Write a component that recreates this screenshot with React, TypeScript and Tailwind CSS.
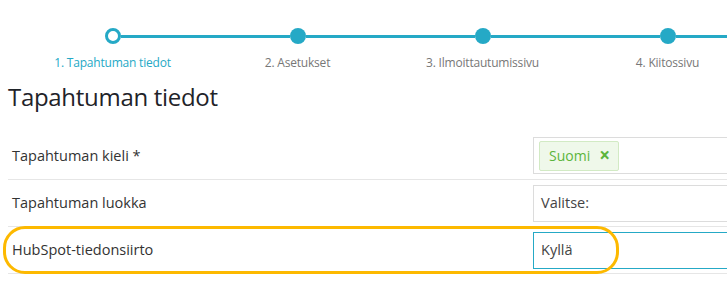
export default function App() {
  const steps = ["1. Tapahtuman tiedot", "2. Asetukset", "3. Ilmoittautumissivu", "4. Kiitossivu"]

  return (
    <div className="w-[727px] h-[298px] overflow-hidden bg-white font-['Open_Sans',sans-serif]">
      {/* stepper */}
      <div className="flex pt-[28px] ml-[20px] w-[760px]">
        {steps.map((label, i) => (
          <div key={label} className="w-[185px] shrink-0 flex flex-col items-center">
            <div className="flex items-center w-full h-[16px]">
              <div className={`flex-1 h-[3px] ${i === 0 ? "bg-transparent" : "bg-[#25a9c6]"}`} />
              {i === 0 ? (
                <div className="w-[16px] h-[16px] rounded-full border-[3px] border-[#25a9c6] bg-white" />
              ) : (
                <div className="w-[16px] h-[16px] rounded-full bg-[#25a9c6]" />
              )}
              <div className="flex-1 h-[3px] bg-[#25a9c6]" />
            </div>
            <div
              className={`mt-[11px] text-[12px] leading-[16px] tracking-[-0.2px] ${
                i === 0 ? "text-[#25a9c6]" : "text-[#777]"
              }`}
            >
              {label}
            </div>
          </div>
        ))}
      </div>

      {/* heading */}
      <h1 className="mt-[11px] pl-[8px] text-[24px] leading-[30px] text-[#1f2329] tracking-[-0.3px]">
        Tapahtuman tiedot
      </h1>

      {/* form rows */}
      <div className="mt-[20px] ml-[8px] w-[800px]">
        <div className="flex items-center h-[48px] border-b border-[#e6e6e6]">
          <div className="w-[525px] shrink-0 pl-[4px] text-[14.5px] text-[#333]">Tapahtuman kieli *</div>
          <div className="flex items-center h-[37px] w-[260px] shrink-0 border border-[#dcdcdc] px-[5px]">
            <div className="flex items-center gap-[9px] h-[30px] pl-[9px] pr-[8px] bg-[#eff8ea] border border-[#d2eac4] rounded-[2px] text-[#5cb53c] text-[14px]">
              <span>Suomi</span>
              <span className="font-bold text-[19px] leading-none">×</span>
            </div>
          </div>
        </div>

        <div className="flex items-center h-[47px] border-b border-[#e6e6e6]">
          <div className="w-[525px] shrink-0 pl-[4px] text-[14.5px] text-[#333]">Tapahtuman luokka</div>
          <div className="flex items-center h-[37px] w-[260px] shrink-0 border border-[#dcdcdc] px-[7px] text-[14.5px] text-[#444]">
            Valitse:
          </div>
        </div>

        <div className="relative flex items-center h-[47px] border-b border-[#e6e6e6]">
          <div className="w-[525px] shrink-0 pl-[4px] text-[14.5px] text-[#333]">HubSpot-tiedonsiirto</div>
          <div className="flex items-center h-[37px] w-[260px] shrink-0 border border-[#25a9c6] px-[7px] text-[14.5px] text-[#444]">
            Kyllä
          </div>
          <div className="absolute left-[-5px] top-[-1px] w-[616px] h-[48px] rounded-[22px] border-[3.5px] border-[#fdb900] pointer-events-none" />
        </div>
      </div>
    </div>
  )
}
